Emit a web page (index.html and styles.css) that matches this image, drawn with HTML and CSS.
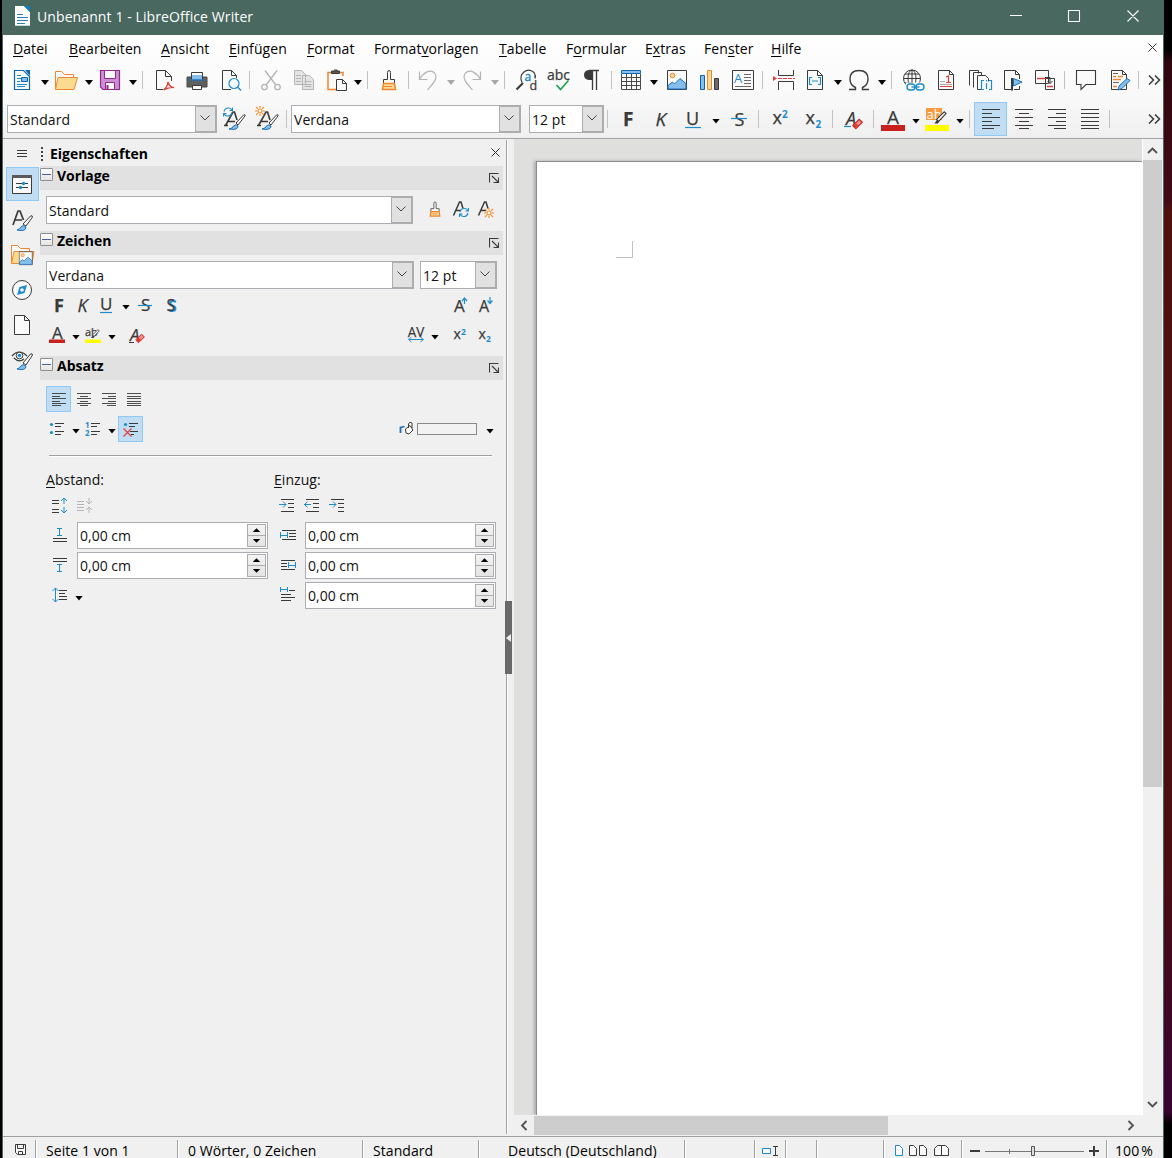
FILE: index.html
```html
<!DOCTYPE html>
<html lang="de">
<head>
<meta charset="utf-8">
<title>Unbenannt 1 - LibreOffice Writer</title>
<link rel="stylesheet" href="styles.css">
</head>
<body>
<svg class="defs" aria-hidden="true">
  <symbol id="i-chev" viewBox="0 0 10 6"><path d="M.5.5 5 5 9.500.5" fill="none" stroke="#444"/></symbol>
  <symbol id="i-close" viewBox="0 0 9 9"><path d="M.5.5l8 8M8.500.5l-8 8" fill="none" stroke="#333"/></symbol>
  <symbol id="i-more" viewBox="0 0 13 10"><path d="M1 .5 5.500 5 1 9.500M7 .5 11.500 5 7 9.500" fill="none" stroke="#3a3a38" stroke-width="1.500"/></symbol>
  <symbol id="i-brush" viewBox="0 0 24 24"><path d="M10.500 11.500v-7q0-2 1.500-2t1.500 2v7h4v4h-11v-4z" fill="#fafafa" stroke="#3a3a38"/><path d="M6.500 15.500h11l1 6h-13z" fill="#fbd993" stroke="#ed8733" stroke-width="1.500"/><path d="M6 18.500h9" stroke="#ed8733"/></symbol>
  <symbol id="i-left" viewBox="0 0 24 24"><path d="M3 2.500h18M3 6.500h10M3 10.500h18M3 14.500h10M3 18.500h18M3 21.500h12" stroke="#3a3a38" stroke-width="1.200"/></symbol>
  <symbol id="i-center" viewBox="0 0 24 24"><path d="M3 2.500h18M7 6.500h10M3 10.500h18M7 14.500h10M3 18.500h18M7 21.500h10" stroke="#3a3a38" stroke-width="1.200"/></symbol>
  <symbol id="i-right" viewBox="0 0 24 24"><path d="M3 2.500h18M11 6.500h10M3 10.500h18M11 14.500h10M3 18.500h18M9 21.500h12" stroke="#3a3a38" stroke-width="1.200"/></symbol>
  <symbol id="i-just" viewBox="0 0 24 24"><path d="M3 2.500h18M3 6.500h18M3 10.500h18M3 14.500h18M3 18.500h18M3 21.500h18" stroke="#3a3a38" stroke-width="1.200"/></symbol>
  <symbol id="i-styleA" viewBox="0 0 24 24"><path d="M3.500 18.500 11 5h1.500L15 13M6.500 14.500H13M2 18.500h4" fill="none" stroke="#3a3a38" stroke-width="1.600"/><path d="M14 16 21.500 8q2-1 1.500 1l-7 9z" fill="#fff" stroke="#3a3a38"/><path d="M7 22q3.500-.5 4.500-3 2.500-2.500 4.500 0 0 4.500-9 3z" fill="#83beec" stroke="#1e6fb8"/></symbol>
  <symbol id="i-sync" viewBox="0 0 10 10"><path d="M1 4.500q1-4 5-3.500 2 0 3 2.500M9.500.5v3h-3M9 5.500q-1 4-5 3.500-2 0-3-2.500M.5 9.500v-3h3" fill="none" stroke="#1e8bcd" stroke-width="1.100"/></symbol>
  <symbol id="i-sun" viewBox="0 0 10 10"><circle cx="5" cy="5" r="2" fill="#fff" stroke="#f28e2c" stroke-width="1.200"/><path d="M5 0v2M5 8v2M0 5h2M8 5h2M1 1l1.800 1.800M9 9 7.200 7.200M9 1 7.200 2.800M1 9l1.800-1.800" stroke="#f28e2c" stroke-width="1.100"/></symbol>
  <symbol id="i-pic" viewBox="0 0 21 21"><path d="M1 1h19v19H1z" fill="#fafafa" stroke="#3a3a38"/><path d="M1.500 16 6 12.500l2 2L13.500 9l6 5v5.500h-18z" fill="#83beec" stroke="#1e6fb8"/><circle cx="6" cy="6" r="2.300" fill="#fbd993" stroke="#ed8733"/></symbol>
  <symbol id="i-launch" viewBox="0 0 10 10"><path d="M.5 9.500v-9h9M9.500 4.500v5h-5M3 3l6 6" fill="none" stroke="#3a3a38" stroke-width="1.100"/></symbol>
  <symbol id="i-eraser" viewBox="0 0 10 10"><path d="M.7 6.500 6.500.7 9.400 3.400 3.500 9.200z" fill="#f28b8b" stroke="#c9211e"/><path d="M1 6.500 3.500 4 6 6.500 3.500 9z" fill="#d9403a"/></symbol>
  <symbol id="i-nibs" viewBox="0 0 10 10"><path d="M2.500 6 8 .6l1.300 1.200L4 7.500z" fill="#fafafa" stroke="#3a3a38" stroke-width=".8"/><path d="M2.800 6.500 1 9h2.500l1-1.500z" fill="#3a3a38"/></symbol>
</svg>

<div class="desktop">
<div class="window">
  <header class="titlebar">
    <svg class="applogo" width="15" height="20" viewBox="0 0 15 20"><path d="M0 0h9l6 6v14H0z" fill="#fff"/><path d="M9 0h6v6z" fill="#0e7cc1"/><path d="M2 8.500h6M2 11.500h11M2 14.500h11M2 17.500h8" stroke="#2a80b9"/><path d="M0 19.500h15" stroke="#bcd6e6"/></svg>
    <span class="title">Unbenannt 1 - LibreOffice Writer</span>
    <svg class="winctl" width="130" height="14" viewBox="0 0 130 14"><path d="M0 6.500h12M58.500 1.500h11v11h-11zM117.500 1.500l11 11M128.500 1.500l-11 11" fill="none" stroke="#fff" stroke-width="1.100"/></svg>
  </header>

  <nav class="menubar">
    <span><u>D</u>atei</span><span><u>B</u>earbeiten</span><span><u>A</u>nsicht</span><span><u>E</u>infügen</span><span><u>F</u>ormat</span><span>Format<u>v</u>orlagen</span><span><u>T</u>abelle</span><span>F<u>o</u>rmular</span><span>E<u>x</u>tras</span><span>Fen<u>s</u>ter</span><span><u>H</u>ilfe</span>
    <svg width="9" height="9"><use href="#i-close"/></svg>
  </nav>

  <div class="toolbar standard">
    <svg class="ic" viewBox="0 0 24 24"><path d="M4.500 2.500h9l6 6v13h-15z" fill="#fafafa" stroke="#0d65b0" stroke-width="1.200"/><path d="M15 2h5v6z" fill="#0d65b0"/><path d="M7 7.500h4M7 10.500h4M7 13.500h3M7 18.500h8M7 16.500h10" stroke="#1e8bcd"/><path d="M11.500 9.500h6v4h-6z" fill="#83beec" stroke="#0d65b0"/></svg>
    <i class="dd"></i>
    <svg class="ic" viewBox="0 0 24 24"><path d="M1.500 21V3.500h6l3 3h9v3" fill="#fafafa" stroke="#ed8733"/><path d="M1.500 21.500 4 9.500h19.500L20 21.500z" fill="#fbdb90" stroke="#ed8733"/></svg>
    <i class="dd"></i>
    <svg class="ic" viewBox="0 0 24 24"><path d="M2.500 2.500h19v19H5l-2.500-2.500z" fill="#cc8fd3" stroke="#92278f" stroke-width="1.200"/><path d="M6.500 2.500h11v8h-11zM7.500 14.500h9v7h-9z" fill="#fafafa" stroke="#92278f"/><path d="M9.500 17v4" stroke="#92278f" stroke-width="2"/></svg>
    <i class="dd"></i><i class="sep"></i>
    <svg class="ic" viewBox="0 0 24 24"><path d="M10 21.500H3.500v-19h9l6 6V13M12.500 2.500v6h6" fill="#fafafa" stroke="#3a3a38"/><path d="M10.500 22q4-3 4.500-8 2 6 6 5.500-4-1-10.500 2.500z" fill="none" stroke="#e0403a" stroke-width="1.300"/></svg>
    <svg class="ic" viewBox="0 0 24 24"><path d="M2 9h20v10H2z" fill="#5f5f5d" stroke="#4a4a48"/><path d="M6.500 11V4.500h11V11z" fill="#fafafa" stroke="#3a3a38"/><path d="M7 7h10v5H7z" fill="#83beec"/><path d="M5 12h14" stroke="#1e6fb8" stroke-width="1.500"/><path d="M7.500 17.500h9v4h-9z" fill="#fafafa" stroke="#3a3a38"/></svg>
    <svg class="ic" viewBox="0 0 24 24"><path d="M12 21.500H3.500v-19h9l5 5V10M12.500 2.500v5h5" fill="#fafafa" stroke="#3a3a38"/><circle cx="15" cy="15.500" r="5" fill="#f4fafe" stroke="#1e8bcd" stroke-width="1.200"/><path d="m18.500 19 3.500 3.500" stroke="#1e8bcd" stroke-width="1.400"/></svg>
    <i class="sep"></i>
    <svg class="ic" viewBox="0 0 24 24"><g fill="none" stroke="#b4b4b4" stroke-width="1.300"><path d="m6 2.500 10.500 14M18 2.500 7.500 16.500"/><circle cx="5.500" cy="19" r="2.700"/><circle cx="18.500" cy="19" r="2.700"/></g></svg>
    <svg class="ic" viewBox="0 0 24 24"><g fill="#e4e4e4" stroke="#b4b4b4"><path d="M2.500 2.500h7l4 4v10h-11zM10.500 7.500h7l4 4v10h-11z"/><path d="M4 7.500h5M4 10.500h5M4 13.500h5M12.500 13.500h7M12.500 16.500h7M12.500 18.500h7"/></g></svg>
    <svg class="ic" viewBox="0 0 24 24"><path d="M8 4.500H3v17h8M13 4.500h5V8" fill="#fafafa" stroke="#ed8733" stroke-width="1.500"/><path d="M6.500 3h8v2.500h-8zM9 2h3v1" fill="#5a5a58" stroke="#3a3a38"/><path d="M11.500 11.500h6l4 4v7h-10zM17.500 11.500v4h4" fill="#fafafa" stroke="#3a3a38"/></svg>
    <i class="dd"></i><i class="sep"></i>
    <svg class="ic" viewBox="0 0 24 24"><use href="#i-brush"/></svg>
    <i class="sep"></i>
    <svg class="ic" viewBox="0 0 24 24"><path d="M3.500 3.500v8h8M3.500 11.500C7 5 14 .5 18.500 5c4 5-1 10-7 17" fill="none" stroke="#b4b4b4" stroke-width="1.200"/></svg>
    <i class="dd off"></i>
    <svg class="ic" viewBox="0 0 24 24"><path d="M19.500 3.500v8h-8M19.500 11.500C16 5 9 .5 4.500 5c-4 5 1 10 7 17" fill="none" stroke="#b4b4b4" stroke-width="1.200"/></svg>
    <i class="dd off"></i><i class="sep"></i>
    <svg class="ic" viewBox="0 0 24 24"><path d="M7 14.500Q4 8 9 4q5-4 10 .5 2 3 1 6" fill="none" stroke="#3a3a38" stroke-width="1.200"/><path d="M8 15 1.500 21.500" stroke="#3a3a38" stroke-width="2.200"/><text class="t" x="9.500" y="13" font-size="12" fill="#1e8bcd" stroke="#1e8bcd" stroke-width=".4">a</text><text class="t" x="14.500" y="22" font-size="12.500">d</text></svg>
    <svg class="ic" viewBox="0 0 24 24"><text class="t" x="0" y="12" font-size="14" textLength="23">abc</text><path d="m9.500 17 4 4.500 8-9" fill="none" stroke="#18a34b" stroke-width="1.600"/></svg>
    <svg class="ic" viewBox="0 0 24 24"><path d="M13 2v10H9Q4 11.500 4 7t5-5z" fill="#3a3a38"/><path d="M12.500 2v20M16.500 2v20M9 2.500h10" stroke="#3a3a38" stroke-width="1.300"/></svg>
    <i class="sep"></i>
    <svg class="ic" viewBox="0 0 24 24"><path d="M2.500 2.500h19v19h-19z" fill="#fafafa"/><path d="M2.500 6v15.500h19V6M2 9.500h20M2 13.500h20M2 17.500h20M7.500 6v15M12.500 6v15M17.500 6v15" fill="none" stroke="#4a4a48"/><path d="M2.500 2.500h19v3h-19z" fill="#83beec" stroke="#0d65b0"/></svg>
    <i class="dd"></i>
    <svg class="ic" viewBox="0 0 24 24"><use href="#i-pic" x="1.500" y="1.500" width="21" height="21"/></svg>
    <svg class="ic" viewBox="0 0 24 24"><path d="M3.500 7.500h4v14h-4z" fill="#83beec" stroke="#0d65b0"/><path d="M10.500 2.500h4v19h-4z" fill="#fbdb90" stroke="#ed8733"/><path d="M17.500 10.500h4v11h-4z" fill="#6a6a68" stroke="#3a3a38"/></svg>
    <svg class="ic" viewBox="0 0 24 24"><path d="M1.500 2.500h21v19h-21z" fill="#fafafa" stroke="#3a3a38"/><text class="t" x="3" y="15" font-size="13" fill="#1e8bcd">A</text><path d="M13 6.500h7M13 9.500h7M13 12.500h7M13 15.500h7M4 18.500h16" stroke="#6a6a68"/></svg>
    <i class="sep"></i>
    <svg class="ic" viewBox="0 0 24 24"><path d="M6.500 2v5.500h15V2M6.500 22v-8.500h15V22" fill="#fafafa" stroke="#3a3a38"/><path d="M1 8v5l4-2.500z" fill="#e0403a"/><path d="M6 10.500h17" stroke="#e0403a" stroke-dasharray="4 1"/></svg>
    <svg class="ic" viewBox="0 0 24 24"><path d="M4.500 2.500h10l5 5v14h-15zM14.500 2.500v5h5" fill="#fafafa" stroke="#3a3a38"/><path d="M9 9.500H6.500v7H9M15 9.500h2.500v7H15M9 13h6" fill="none" stroke="#1e8bcd" stroke-width="1.200"/></svg>
    <i class="dd"></i>
    <svg class="ic" viewBox="0 0 24 24"><path d="M2 21.500h6.500v-2Q3 17 3 11q0-8.500 9-8.500t9 8.500q0 6-5.500 8.500v2H22" fill="none" stroke="#3a3a38" stroke-width="1.400"/></svg>
    <i class="dd"></i><i class="sep"></i>
    <svg class="ic" viewBox="0 0 24 24"><g fill="none" stroke="#3a3a38"><circle cx="10" cy="10.500" r="8.500"/><ellipse cx="10" cy="10.500" rx="4" ry="8.500"/><path d="M1.500 10.500h17M3 6h14M3 15h8M10 2v14"/></g><path d="M4 14.500h20V24H4z" fill="#f9f9f9"/><g fill="none" stroke="#1e8bcd" stroke-width="1.400"><rect x="5" y="16" width="8" height="6" rx="3"/><rect x="14" y="16" width="8" height="6" rx="3"/><path d="M9.500 19h8"/></g></svg>
    <svg class="ic" viewBox="0 0 24 24"><path d="M4.500 2.500h11l4 4v15h-15zM15.500 2.500v4h4" fill="#fafafa" stroke="#3a3a38"/><path d="M6 13.500h5M6 16.500h12" stroke="#aaa"/><path d="M6 18.500h12M12 14.500h5M12 9l2.500-1v6.500" fill="none" stroke="#e0403a" stroke-width="1.200"/></svg>
    <svg class="ic" viewBox="0 0 24 24"><g fill="#fafafa" stroke="#3a3a38"><path d="M1.500 17.500v-15h9v3M5.500 19.500v-15h8v3M9.500 21.500v-14h8l3 3v3M9.500 21.500h4"/></g><path d="M16 12.500h-2.500v9H16M21 12.500h2.500v9H21M18.500 12v1.500M18.500 15v6" fill="none" stroke="#1e8bcd" stroke-width="1.200"/></svg>
    <svg class="ic" viewBox="0 0 24 24"><path d="M11 21.500H3.500v-19h11l4 4V11M14.500 2.500v4h4M13 21.500h5.500V18" fill="#fafafa" stroke="#3a3a38"/><path d="M11 10v12.500" stroke="#3a3a38" stroke-width="2"/><path d="M12.500 10.500 21 14l-8.500 4z" fill="#83beec" stroke="#1e6fb8"/></svg>
    <svg class="ic" viewBox="0 0 24 24"><path d="M2.500 2.500h13v13h-13zM12.500 10.500h9v11h-9z" fill="#fafafa" stroke="#3a3a38"/><path d="M4 10.500h8M14 18.500h6" stroke="#e0403a" stroke-width="1.500"/><path d="M12 9.500h5v6M14.500 13l2.500 2.500 2.500-2.500" fill="none" stroke="#3a3a38"/></svg>
    <i class="sep"></i>
    <svg class="ic" viewBox="0 0 24 24"><path d="M2.500 2.500h19v14H12l-5 5v-5H2.500z" fill="#fafafa" stroke="#3a3a38" stroke-width="1.100"/></svg>
    <svg class="ic" viewBox="0 0 24 24"><path d="M3.500 2.500h11l4 4v15h-15zM14.500 2.500v4h4" fill="#fafafa" stroke="#3a3a38"/><path d="M5 5.500h5M5 14.500h6" stroke="#666"/><path d="M5 8.500h3M10 8.500h5M5 11.500h8M5 18.500h4" stroke="#ed8733" stroke-width="1.300"/><path d="m11 18 8-7.500 3 2-8 8-4 1.500z" fill="#83beec" stroke="#1e6fb8"/></svg>
    <i class="sep"></i>
    <svg class="more" viewBox="0 0 13 10"><use href="#i-more"/></svg>
  </div>

  <div class="toolbar format">
    <div class="combo w210"><span>Standard</span><b><svg><use href="#i-chev"/></svg></b></div>
    <svg class="ic" viewBox="0 0 24 24"><use href="#i-styleA"/><use href="#i-sync" x="1" y="0" width="10" height="10"/></svg>
    <svg class="ic" viewBox="0 0 24 24"><use href="#i-styleA"/><use href="#i-sun" x="0" y="-1" width="10" height="10"/></svg>
    <i class="sep"></i>
    <div class="combo w230"><span>Verdana</span><b><svg><use href="#i-chev"/></svg></b></div>
    <div class="combo w75"><span>12 pt</span><b><svg><use href="#i-chev"/></svg></b></div>
    <i class="sep"></i>
    <svg class="ic" viewBox="0 0 24 24"><text class="t b" x="7" y="19" font-size="19">F</text></svg>
    <svg class="ic" viewBox="0 0 24 24"><text class="t i" x="6.500" y="19" font-size="19">K</text></svg>
    <svg class="ic" viewBox="0 0 24 24"><text class="t" x="5" y="18" font-size="18">U</text><path d="M4 20.500h16" stroke="#1e8bcd" stroke-width="1.200"/></svg>
    <i class="dd"></i>
    <svg class="ic" viewBox="0 0 24 24"><text class="t" x="7.500" y="18.500" font-size="18">S</text><path d="M4 11.500h16" stroke="#1e8bcd" stroke-width="1.200"/></svg>
    <i class="sep"></i>
    <svg class="ic" viewBox="0 0 24 24"><text class="t" x="3.500" y="17" font-size="18">x</text><text class="t b" x="13" y="11" font-size="10" fill="#1e8bcd">2</text></svg>
    <svg class="ic" viewBox="0 0 24 24"><text class="t" x="3.500" y="17" font-size="18">x</text><text class="t b" x="13.500" y="21" font-size="10" fill="#1e8bcd">2</text></svg>
    <i class="sep"></i>
    <svg class="ic" viewBox="0 0 24 24"><text class="t i" x="4" y="18" font-size="18">A</text><path d="M2 19.500h7" stroke="#1e8bcd" stroke-width="1.200"/><use href="#i-eraser" x="10" y="11.500" width="11" height="11"/></svg>
    <i class="sep"></i>
    <svg class="ic" viewBox="0 0 24 24"><text class="t" x="6" y="17" font-size="19">A</text><path d="M0 18h24v6H0z" fill="#c9211e"/></svg>
    <i class="dd"></i>
    <svg class="ic" viewBox="0 0 24 24"><path d="M1 1h16v12H1z" fill="#f79a3e"/><text class="t" x="1.500" y="11.500" font-size="13" fill="#fff">ab</text><path d="M0 18h24v6H0z" fill="#ff0"/><use href="#i-nibs" x="8" y="4" width="14" height="14"/></svg>
    <i class="dd"></i><i class="sep"></i>
    <span class="btn on"><svg viewBox="0 0 24 24"><use href="#i-left"/></svg></span>
    <svg class="ic" viewBox="0 0 24 24"><use href="#i-center"/></svg>
    <svg class="ic" viewBox="0 0 24 24"><use href="#i-right"/></svg>
    <svg class="ic" viewBox="0 0 24 24"><use href="#i-just"/></svg>
    <i class="sep"></i>
    <svg class="more" viewBox="0 0 13 10"><use href="#i-more"/></svg>
  </div>

  <main class="work">
    <aside class="tabs">
      <svg class="burger" width="11" height="9" viewBox="0 0 11 9"><path d="M0 1.500h10M0 4.500h10M0 7.500h10" stroke="#3a3a38"/></svg>
      <span class="tab on"><svg viewBox="0 0 24 24"><path d="M2.500 3.500h19v18h-19z" fill="#fafafa" stroke="#3a3a38"/><path d="M2 3h20v3H2z" fill="#5a5a58"/><path d="M6 11.500h12M6 15.500h12" stroke="#3a3a38"/><circle cx="13.500" cy="11.500" r="1.700" fill="#1e8bcd"/><circle cx="10.500" cy="15.500" r="1.700" fill="#1e8bcd"/></svg></span>
      <span class="tab"><svg viewBox="0 0 24 24"><path d="M3 17 8 3h2l3.500 9M5 12h7" fill="none" stroke="#3a3a38" stroke-width="1.700"/><path d="m13 16 7.500-8q2-1 2 1L16 18z" fill="#fafafa" stroke="#3a3a38"/><path d="M7 22q3-1 4-3 2-3 5 0 0 5-9 3z" fill="#83beec" stroke="#1e6fb8"/></svg></span>
      <span class="tab"><svg viewBox="0 0 24 24"><path d="M1.500 20V2.500h6l3 3h9v4" fill="#fafafa" stroke="#ed8733"/><path d="M1.500 20.500 4 8.500h20L22 20.500z" fill="#fbdb90" stroke="#ed8733"/><use href="#i-pic" x="8.500" y="8" width="14.500" height="14.500"/></svg></span>
      <span class="tab"><svg viewBox="0 0 24 24"><circle cx="12" cy="12" r="9.500" fill="#fafafa" stroke="#3a3a38"/><path d="m17 7-2.500 8L7 17l2.500-8z" fill="#1e8bcd"/><circle cx="12" cy="12" r="1.800" fill="#fafafa"/></svg></span>
      <span class="tab"><svg viewBox="0 0 24 24"><path d="M4.500 2.500h10l5 5v14h-15zM14.500 2.500v5h5" fill="#fafafa" stroke="#3a3a38"/></svg></span>
      <span class="tab"><svg viewBox="0 0 24 24"><path d="M2 8q7-8 15 0M4 10q5 5 10 1" fill="none" stroke="#3a3a38" stroke-width="1.200"/><circle cx="9.500" cy="7.500" r="3.300" fill="#fafafa" stroke="#3a3a38"/><circle cx="9.500" cy="7.500" r="1.800" fill="#1e8bcd"/><path d="m13 15 7.500-9q2-1 2 1L16 17z" fill="#fafafa" stroke="#3a3a38"/><path d="M7 21q3-1 4-3 2-3 5 0 0 5-9 3z" fill="#83beec" stroke="#1e6fb8"/></svg></span>
    </aside>

    <section class="deck">
      <div class="decktitle"><i class="grip"></i><strong>Eigenschaften</strong><svg width="9" height="9"><use href="#i-close"/></svg></div>

      <div class="head"><i class="minus"></i><strong>Vorlage</strong><svg><use href="#i-launch"/></svg></div>
      <div class="row combos style">
        <div class="combo tall w367"><span>Standard</span><b><svg><use href="#i-chev"/></svg></b></div>
        <svg class="s20" viewBox="0 0 24 24"><use href="#i-brush"/></svg>
        <svg class="s16" viewBox="0 0 16 16"><path d="M.5 14.500 6.500 1H8l2 6.500M3 9.500h5" fill="none" stroke="#3a3a38" stroke-width="1.500"/><use href="#i-sync" x="6" y="6.500" width="10" height="10"/></svg>
        <svg class="s16" viewBox="0 0 16 16"><path d="M.5 14.500 6.500 1H8l2 6.500M3 9.500h5" fill="none" stroke="#3a3a38" stroke-width="1.500"/><use href="#i-sun" x="6" y="7" width="10" height="10"/></svg>
      </div>

      <div class="head"><i class="minus"></i><strong>Zeichen</strong><svg><use href="#i-launch"/></svg></div>
      <div class="row combos">
        <div class="combo tall w368"><span>Verdana</span><b><svg><use href="#i-chev"/></svg></b></div>
        <div class="combo tall w77"><span>12 pt</span><b><svg><use href="#i-chev"/></svg></b></div>
      </div>
      <div class="row chars1">
        <svg class="s16" viewBox="0 0 16 16"><text class="t b" x="3" y="14.500" font-size="18">F</text></svg>
        <svg class="s16" viewBox="0 0 16 16"><text class="t i" x="2.500" y="14.500" font-size="18">K</text></svg>
        <svg class="s16" viewBox="0 0 16 16"><text class="t" x="2" y="13" font-size="17">U</text><path d="M2 15.500h12" stroke="#1e8bcd" stroke-width="1.200"/></svg>
        <i class="dd"></i>
        <svg class="s16" viewBox="0 0 16 16"><text class="t" x="4" y="14" font-size="17">S</text><path d="M1 8.500h14" stroke="#1e8bcd" stroke-width="1.200"/></svg>
        <svg class="s16" viewBox="0 0 16 16"><text class="t b" x="5" y="15" font-size="16" fill="#1e8bcd">S</text><text class="t" x="3.500" y="14" font-size="16">S</text></svg>
        <svg class="s16" viewBox="0 0 16 16"><text class="t" x="1" y="15" font-size="17">A</text><path d="M11.500 7V1M9 4l2.500-3L14 4" fill="none" stroke="#1e8bcd" stroke-width="1.200"/></svg>
        <svg class="s16" viewBox="0 0 16 16"><text class="t" x="1" y="15" font-size="16">A</text><path d="M12 0v6M9.500 3.500 12 6.500l2.500-3" fill="none" stroke="#1e8bcd" stroke-width="1.200"/></svg>
      </div>
      <div class="row chars2">
        <svg class="s16" viewBox="0 0 16 16"><text class="t" x="3" y="12" font-size="17">A</text><path d="M0 12.500h16V16H0z" fill="#c9211e"/></svg>
        <i class="dd"></i>
        <svg class="s16" viewBox="0 0 16 16"><text class="t" x="0" y="9" font-size="11">ab</text><path d="M0 12.500h16V16H0z" fill="#ff0"/><use href="#i-nibs" x="5" y="2" width="10" height="10"/></svg>
        <i class="dd"></i>
        <svg class="s16" viewBox="0 0 16 16"><text class="t i" x="1" y="14" font-size="17">A</text><path d="M0 15.500h5" stroke="#3a3a38"/><use href="#i-eraser" x="6" y="6.500" width="10" height="10"/></svg>
        <svg class="s16" viewBox="0 0 16 16"><text class="t" x="-.3" y="10" font-size="14" textLength="16.500" lengthAdjust="spacingAndGlyphs">AV</text><path d="M.5 12.500h15M3.500 9.800.8 12.500l2.700 2.700M12.500 9.800l2.700 2.700-2.700 2.700" fill="none" stroke="#1e8bcd"/></svg>
        <i class="dd"></i>
        <svg class="s16" viewBox="0 0 16 16"><text class="t" x="1.500" y="12" font-size="14">x</text><text class="t b" x="9" y="8" font-size="8.500" fill="#1e8bcd">2</text></svg>
        <svg class="s16" viewBox="0 0 16 16"><text class="t" x="1.500" y="12" font-size="14">x</text><text class="t b" x="9" y="14.500" font-size="8.500" fill="#1e8bcd">2</text></svg>
      </div>

      <div class="head"><i class="minus"></i><strong>Absatz</strong><svg><use href="#i-launch"/></svg></div>
      <div class="row para1">
        <span class="sbtn on"><svg viewBox="0 0 16 16"><path d="M1 2.500h14M1 5.500h8M1 7.500h14M1 10.500h8M1 12.500h14M1 14.500h9" stroke="#3a3a38" stroke-width=".9"/></svg></span>
        <span class="sbtn"><svg viewBox="0 0 16 16"><path d="M1 2.500h14M4 5.500h8M1 7.500h14M4 10.500h8M1 12.500h14M4 14.500h8" stroke="#3a3a38" stroke-width=".9"/></svg></span>
        <span class="sbtn"><svg viewBox="0 0 16 16"><path d="M1 2.500h14M7 5.500h8M1 7.500h14M7 10.500h8M1 12.500h14M6 14.500h9" stroke="#3a3a38" stroke-width=".9"/></svg></span>
        <span class="sbtn"><svg viewBox="0 0 16 16"><path d="M1 2.500h14M1 5.500h14M1 7.500h14M1 10.500h14M1 12.500h14M1 14.500h14" stroke="#3a3a38" stroke-width=".9"/></svg></span>
      </div>
      <div class="row para2">
        <svg class="s16" viewBox="0 0 16 16"><circle cx="2.500" cy="3.500" r="1.600" fill="#1e8bcd"/><circle cx="2.500" cy="11.500" r="1.600" fill="#1e8bcd"/><path d="M6 2.500h9M6 5.500h6M6 10.500h9M6 13.500h6" stroke="#3a3a38"/></svg>
        <i class="dd"></i>
        <svg class="s16" viewBox="0 0 16 16"><text class="t b" x="0" y="7" font-size="8" fill="#1e8bcd">1</text><text class="t b" x="0" y="15" font-size="8" fill="#1e8bcd">2</text><path d="M6 2.500h9M6 5.500h6M6 10.500h9M6 13.500h6" stroke="#3a3a38"/></svg>
        <i class="dd"></i>
        <span class="sbtn on"><svg viewBox="0 0 16 16"><circle cx="2.500" cy="3.500" r="1.600" fill="#1e8bcd"/><path d="M6 2.500h9M6 5.500h6M7 10.500h8M8 13.500h3" stroke="#3a3a38"/><path d="m.5 7.500 8 8M8.500 7.500l-8 8" stroke="#e0403a" stroke-width="1.200"/></svg></span>
        <svg class="s16" viewBox="0 0 16 16"><path d="M2.500 12V6.500l4-1" fill="none" stroke="#1e6fb8" stroke-width="1.800"/><path d="M7.500 8 12 4.500 15 9l-4 4-3-1zM10.500 7V3q1-3 3.500-1v5" fill="#fafafa" stroke="#3a3a38"/></svg>
        <i class="swatch"></i><i class="dd"></i>
      </div>
      <hr>
      <div class="spacing">
        <div class="col abst">
          <label><u>A</u>bstand:</label>
          <div class="mini">
            <svg class="s16" viewBox="0 0 16 16"><path d="M0 3.500h7M0 6.500h7M0 12.500h7M0 15.500h7" stroke="#3a3a38"/><path d="M12 7V1M9 4l3-3 3 3M12 10v6M9 13l3 3 3-3" fill="none" stroke="#1e8bcd"/></svg>
            <svg class="s16" viewBox="0 0 16 16"><path d="M0 4.500h7M0 7.500h7M0 10.500h7M0 13.500h7M12 1v6M9 4l3 3 3-3M12 16v-6M9 13l3-3 3 3" fill="none" stroke="#b4b4b4"/></svg>
          </div>
          <div class="field"><svg class="s16" viewBox="0 0 16 16"><path d="M1 11.500h14M1 14.500h14" stroke="#3a3a38"/><path d="M5 1.500h5M5 8.500h5M7.500 1v8" stroke="#1e8bcd"/></svg><div class="spin"><span>0,00 cm</span><b><i></i><i></i></b></div></div>
          <div class="field"><svg class="s16" viewBox="0 0 16 16"><path d="M1 1.500h14M1 4.500h14" stroke="#3a3a38"/><path d="M5 7.500h5M5 14.500h5M7.500 7v8" stroke="#1e8bcd"/></svg><div class="spin"><span>0,00 cm</span><b><i></i><i></i></b></div></div>
          <div class="field"><svg class="s16" viewBox="0 0 16 16"><path d="M7 3.500h8M7 6.500h6M7 9.500h8M7 12.500h8" stroke="#3a3a38"/><path d="M3.500 1v14M.5 4l3-3 3 3M.5 12l3 3 3-3" fill="none" stroke="#1e8bcd"/></svg><i class="dd"></i></div>
        </div>
        <div class="col einz">
          <label><u>E</u>inzug:</label>
          <div class="mini">
            <svg class="s16" viewBox="0 0 16 16"><path d="M2 2.500h13M9 6.500h6M9 10.500h6M2 14.500h13" stroke="#3a3a38"/><path d="M0 7.500h7M4 4.500l3 3-3 3" fill="none" stroke="#1e8bcd"/></svg>
            <svg class="s16" viewBox="0 0 16 16"><path d="M2 2.500h13M9 6.500h6M9 10.500h6M2 14.500h13" stroke="#3a3a38"/><path d="M0 7.500h7M3.500 4.500l-3 3 3 3" fill="none" stroke="#1e8bcd"/></svg>
            <svg class="s16" viewBox="0 0 16 16"><path d="M2 2.500h13M9 6.500h6M9 10.500h6M9 14.500h6" stroke="#3a3a38"/><path d="M0 7.500h7M4 4.500l3 3-3 3" fill="none" stroke="#1e8bcd"/></svg>
          </div>
          <div class="field"><svg class="s16" viewBox="0 0 16 16"><path d="M2 3.500h14M9 6.500h7M9 9.500h7M2 12.500h14" stroke="#3a3a38"/><path d="M.5 5v6M7.500 5v6M.5 8.500h7" stroke="#1e8bcd"/></svg><div class="spin"><span>0,00 cm</span><b><i></i><i></i></b></div></div>
          <div class="field"><svg class="s16" viewBox="0 0 16 16"><path d="M1 3.500h14M1 6.500h6M1 9.500h6M1 12.500h14" stroke="#3a3a38"/><path d="M8.500 5v6M15.500 5v6M8.500 8.500h7" stroke="#1e8bcd"/></svg><div class="spin"><span>0,00 cm</span><b><i></i><i></i></b></div></div>
          <div class="field"><svg class="s16" viewBox="0 0 16 16"><path d="M9 3.500h6M1 7.500h10M1 10.500h14M1 13.500h10" stroke="#3a3a38"/><path d="M.5 0v5M7.500 0v5M.5 2.500h7" stroke="#1e8bcd"/></svg><div class="spin"><span>0,00 cm</span><b><i></i><i></i></b></div></div>
        </div>
      </div>
    </section>

    <div class="splitter"><span class="handle"></span></div>

    <section class="editor">
      <div class="canvas"><div class="page"><i class="corner"></i></div></div>
      <div class="vscroll">
        <svg width="11" height="7" viewBox="0 0 11 7"><path d="M1 6 5.500 1.500 10 6" fill="none" stroke="#505050" stroke-width="1.800"/></svg>
        <i></i>
        <svg width="11" height="7" viewBox="0 0 11 7"><path d="M1 1 5.500 5.500 10 1" fill="none" stroke="#505050" stroke-width="1.800"/></svg>
      </div>
      <div class="hscroll">
        <svg width="8" height="11" viewBox="0 0 8 11"><path d="M6.500 1 2 5.500 6.500 10" fill="none" stroke="#505050" stroke-width="1.800"/></svg>
        <i></i>
        <svg width="8" height="11" viewBox="0 0 8 11"><path d="M1.500 1 6 5.500 1.500 10" fill="none" stroke="#505050" stroke-width="1.800"/></svg>
      </div>
    </section>
  </main>

  <footer class="status">
    <span><svg width="11" height="11" viewBox="0 0 11 11"><path d="M.5.5h10v10h-8l-2-2zM2.500.5v4h6v-4M3.500 10.500v-3h4v3" fill="#fafafa" stroke="#3a3a38"/></svg></span>
    <span>Seite 1 von 1</span><span>0 Wörter, 0 Zeichen</span><span>Standard</span><span class="lang">Deutsch (Deutschland)</span><span></span>
    <span><svg width="17" height="12" viewBox="0 0 17 12"><path d="M.5 3.500h8v5h-8z" fill="#fafafa" stroke="#1e8bcd"/><path d="M11 1.500h5M11 10.500h5M13.500 1v10" stroke="#3a3a38"/></svg></span>
    <span></span><span></span>
    <span><svg width="55" height="11" viewBox="0 0 55 11"><path d="M.5.5h4l3 3v7h-7z" fill="#fff" stroke="#1e8bcd"/><path d="M14.500.5h4l3 3v7h-7zM24.500.5h4l3 3v7h-7zM46.500.5h-4l-3 3v7h7zM46.500.5h4l3 3v7h-7z" fill="#fafafa" stroke="#3a3a38"/></svg></span>
    <span><svg width="130" height="12" viewBox="0 0 130 12"><path d="M0 6h10M119 6h10M124 1v10" stroke="#3a3a38" stroke-width="2"/><path d="M15 6.500h99M39.500 4v5" stroke="#777"/><path d="M61.500 1.500h3v9h-3z" fill="#ddd" stroke="#555"/></svg></span>
    <span class="zoom">100<small></small>%</span>
  </footer>
</div>
</div>
</body>
</html>
```
FILE: styles.css
```css
* { box-sizing: border-box; }
body { margin: 0; width: 1172px; height: 1158px; overflow: hidden; font: 14px/20px "Open Sans", "Noto Sans", sans-serif; color: #111; }
.defs { display: none; }
svg { display: block; flex: none; overflow: visible; }
u { text-decoration-thickness: 1px; text-underline-offset: 2px; }
.t { font-family: "Open Sans", sans-serif; }
text.t:not([fill]) { fill: #3a3a38; stroke: #3a3a38; stroke-width: .25px; }
.b { font-weight: 700; }
.i { font-style: italic; }

.desktop { height: 1158px; padding: 0 8px 0 2px; background: linear-gradient(90deg, #000 1100px, transparent 0), linear-gradient(#000 50px, #30060f 62px, #420a17 200px, #50100e 212px, #4b0d10 860px, #3a0430 1085px, #3a0430 1112px, #000 1124px); }
.window { height: 1158px; display: flex; flex-direction: column; border: solid #49685f; border-width: 0 1px; background: #f0f0f0; }

.titlebar { flex: none; height: 35px; display: flex; align-items: center; padding: 0 23px 3px 12px; background: #49685f; color: #fff; }
.title { margin-left: 7px; flex: 1; padding-top: 1px; letter-spacing: .1px; }
.winctl { margin-top: 0; }

.menubar { flex: none; height: 30px; display: grid; grid-template-columns: 56px 92px 68px 78px 67px 125px 67px 79px 59px 67px 1fr 9px; padding: 0 6px 0 10px; background: linear-gradient(#fff, #fcfcfc); color: #000; line-height: 28px; letter-spacing: .07px; }
.menubar svg { margin-top: 8px; }

.toolbar { flex: none; display: grid; align-items: center; }
.ic { width: 24px; height: 24px; }
.more { width: 13px; height: 10px; margin-left: 1px; }
.dd { display: block; width: 8px; height: 5px; background: #000; clip-path: polygon(0 0, 100% 0, 50% 100%); margin-top: 5px; }
.dd.off { background: #a8a8a8; }
.sep { display: block; width: 1px; height: 18px; background: #c2c2c2; }
.standard { height: 38px; padding: 0 0 8px 7px; background: linear-gradient(#fcfcfc, #f8f8f8);
  grid-template-columns: 31px 13px 31px 13px 31px 13px 11px 32px 34px 30px 10px 33px 33px 29px 13px 10px 31px 8px 31px 14px 30px 13px 11px 32px 33px 31px 8px 31px 15px 32px 34px 31px 10px 31px 31px 13px 31px 13px 11px 32px 34px 33px 32px 31px 10px 34px 30px 9px 13px; }
.format { height: 36px; padding: 0 0 4px 4px; background: linear-gradient(#f8f8f8, #efefef); border-bottom: 1px solid #a3a3a5;
  grid-template-columns: 215px 33px 31px 5px 238px 78px 9px 33px 32px 31px 15px 31px 11px 33px 30px 10px 31px 8px 31px 13px 31px 13px 5px 38px 33px 33px 31px 38px 13px; }
.btn { width: 33px; height: 34px; display: grid; place-items: center; }
.btn svg { width: 24px; height: 24px; }
.on { background: #c1ddf3; border: 1px solid #90c8f6; }
.format .btn { margin: -1px 0 -2px; }

.combo { height: 28px; display: flex; background: #fff; border: 1px solid #abadb3; color: #111; line-height: 27px; }
.combo span { flex: 1; padding-left: 2px; letter-spacing: .05px; }
.combo b { width: 21px; display: grid; place-items: center; background: #e1e1e1; border: 1px solid #adadad; }
.combo b svg { width: 10px; height: 6px; margin: 0 1px 2px 0; }
.w210 { width: 210px; } .w230 { width: 230px; } .w75 { width: 75px; }
.w367 { width: 367px; } .w368 { width: 368px; } .w77 { width: 77px; }

.work { flex: none; height: 997px; display: grid; grid-template-columns: 37px 463px 11px 649px; }
.tabs { display: flex; flex-direction: column; align-items: center; padding: 10px 0 0 1px; }
.burger { margin-bottom: 9px; }
.tab { width: 33px; height: 35px; display: grid; place-items: center; }
.tab.on { height: 34px; margin-bottom: 1px; }
.tab svg { width: 24px; height: 24px; }

.deck strong { color: #000; letter-spacing: -.03px; }
.decktitle { height: 27px; display: flex; align-items: center; padding: 2px 4px 0 1px; }
.decktitle strong { margin-left: 7px; flex: 1; }
.decktitle svg { margin: -2px -1px 0 0; }
.grip { width: 2px; height: 14px; background: repeating-linear-gradient(#444 0 2px, transparent 2px 4px); }
.head { height: 24px; display: flex; align-items: center; padding: 0 4px 4px 0; background: #e1e1e1; }
.head strong { margin-left: 4px; flex: 1; }
.head svg { width: 10px; height: 10px; margin-top: 3px; }
.minus { width: 13px; height: 13px; margin-top: -4px; border: 1px solid #8f8f8f; border-radius: 1px; background: linear-gradient(#4a62a0, #4a62a0) center / 9px 1px no-repeat, linear-gradient(#fff, #e4e4e4); }
.row { display: grid; align-items: center; padding-left: 6px; }
.combos { height: 41px; grid-template-columns: 374px 77px; padding-bottom: 1px; }
.combos.style { grid-template-columns: 380px 27px 25px 16px; }
.combos > svg { margin-top: -2px; }
.s16 { width: 16px; height: 16px; }
.s20 { width: 18px; height: 18px; }
.row .dd { margin-top: 4px; }
.chars1 { height: 30px; margin-top: -6px; grid-template-columns: 24px 23px 24px 15px 26px 290px 25px 16px; padding-left: 11px; }
.chars2 { height: 30px; margin-bottom: 6px; grid-template-columns: 23px 13px 23px 21px 279px 23px 21px 25px 16px; padding-left: 9px; }
.para1, .para2 { display: grid; height: 30px; }
.para1 { margin-top: 4px; grid-template-columns: 25px 25px 25px 25px; }
.para2 { grid-template-columns: 23px 13px 23px 10px 280px 19px 69px 8px; padding-left: 9px; }
.sbtn { width: 25px; height: 26px; display: grid; place-items: center; }
.sbtn svg { width: 16px; height: 16px; }
.swatch { width: 60px; height: 12px; border: 1px solid #8a8a8a; background: #f2f2f2; }
hr { margin: 11px 11px 0 9px; height: 2px; border: 0; background: linear-gradient(#a0a0a0 50%, #fff 50%); }
.spacing { display: grid; grid-template-columns: 228px 222px; padding: 13px 0 0 6px; }
.col label { display: block; letter-spacing: .05px; }
.mini { height: 32px; display: flex; gap: 9px; align-items: center; padding: 0 0 2px 6px; }
.einz .mini { padding-left: 5px; }
.field { height: 27px; margin-bottom: 3px; display: flex; align-items: center; padding-left: 6px; }
.field .s16 { margin-top: -2px; }
.field .dd { margin-left: 7px; }
.spin { margin-left: 9px; width: 191px; height: 27px; display: flex; background: #fff; border: 1px solid #abadb3; line-height: 26px; }
.spin span { flex: 1; padding-left: 2px; }
.spin b { width: 19px; margin: 1px; display: grid; grid-template-rows: 1fr 1fr; border: 1px solid #adadad; background: linear-gradient(#adadad, #adadad) center / 100% 1px no-repeat, linear-gradient(#f3f3f3, #e4e4e4); place-items: center; }
.spin i { width: 8px; height: 4px; background: #000; clip-path: polygon(50% 0, 100% 100%, 0 100%); }
.spin i + i { clip-path: polygon(0 0, 100% 0, 50% 100%); }

.splitter { position: relative; margin: 1px 0 2px; background: linear-gradient(90deg, transparent 3px, #a0a0a0 3px 4px, #fff 4px 5px, transparent 5px); }
.handle { position: absolute; left: 2px; top: 461px; width: 7px; height: 73px; background: #696969; }
.handle::after { content: ""; position: absolute; left: 1px; top: 33px; width: 5px; height: 8px; background: #eee; clip-path: polygon(0 50%, 100% 0, 100% 100%); }

.editor { display: grid; grid-template-columns: 628px 21px; grid-template-rows: 976px 21px; }
.canvas { padding: 22px 0 0 22px; background: #dfdfdd; }
.page { height: 954px; padding: 79px 0 0 79px; background: #fff; border: solid #8c8c8c; border-width: 1px 0 0 1px; box-shadow: -2px 0 3px #aaa; clip-path: inset(-4px 0 0 -5px); }
.corner { display: block; width: 17px; height: 17px; border: solid #c0c0c0; border-width: 0 1px 1px 0; }
.vscroll { background: linear-gradient(90deg, #fff 1px, #f0f0f0 1px); display: flex; flex-direction: column; align-items: center; padding: 8px 0 7px; }
.vscroll i { flex: none; width: 19px; height: 627px; margin: 6px 0 auto; background: #cdcdcd; }
.hscroll { grid-column: 1 / 3; display: flex; align-items: center; padding: 0 28px 0 6px; height: 21px; background: #f0f0f0; }
.hscroll i { flex: none; height: 19px; width: 354px; margin: 0 auto 0 6px; background: #cdcdcd; }

.status { flex: 1; display: grid; grid-template-columns: 32px 142px 185px 116px 206px 70px 31px 31px 67px 78px 145px 57px; border-top: 1px solid #a0a0a0; line-height: 28px; color: #000; white-space: nowrap; }
.status span { display: flex; padding-left: 11px; letter-spacing: .06px; }
.status span + span { background: linear-gradient(#a0a0a0, #a0a0a0) 0 3px / 1px 40px no-repeat, linear-gradient(#fff, #fff) 1px 3px / 1px 40px no-repeat; }
.status .lang { padding-left: 30px; }
.status svg { margin-top: 8px; }
.status span:nth-child(1) { padding-left: 12px; }
.status span:nth-child(1) svg { margin-top: 7px; }
.status span:nth-child(7) { padding-left: 8px; }
.status span:nth-child(10) { padding-left: 12px; }
.status span:nth-child(11) { padding-left: 9px; }
.status .zoom { padding-left: 9px; }
.status small { width: 2px; }
```
